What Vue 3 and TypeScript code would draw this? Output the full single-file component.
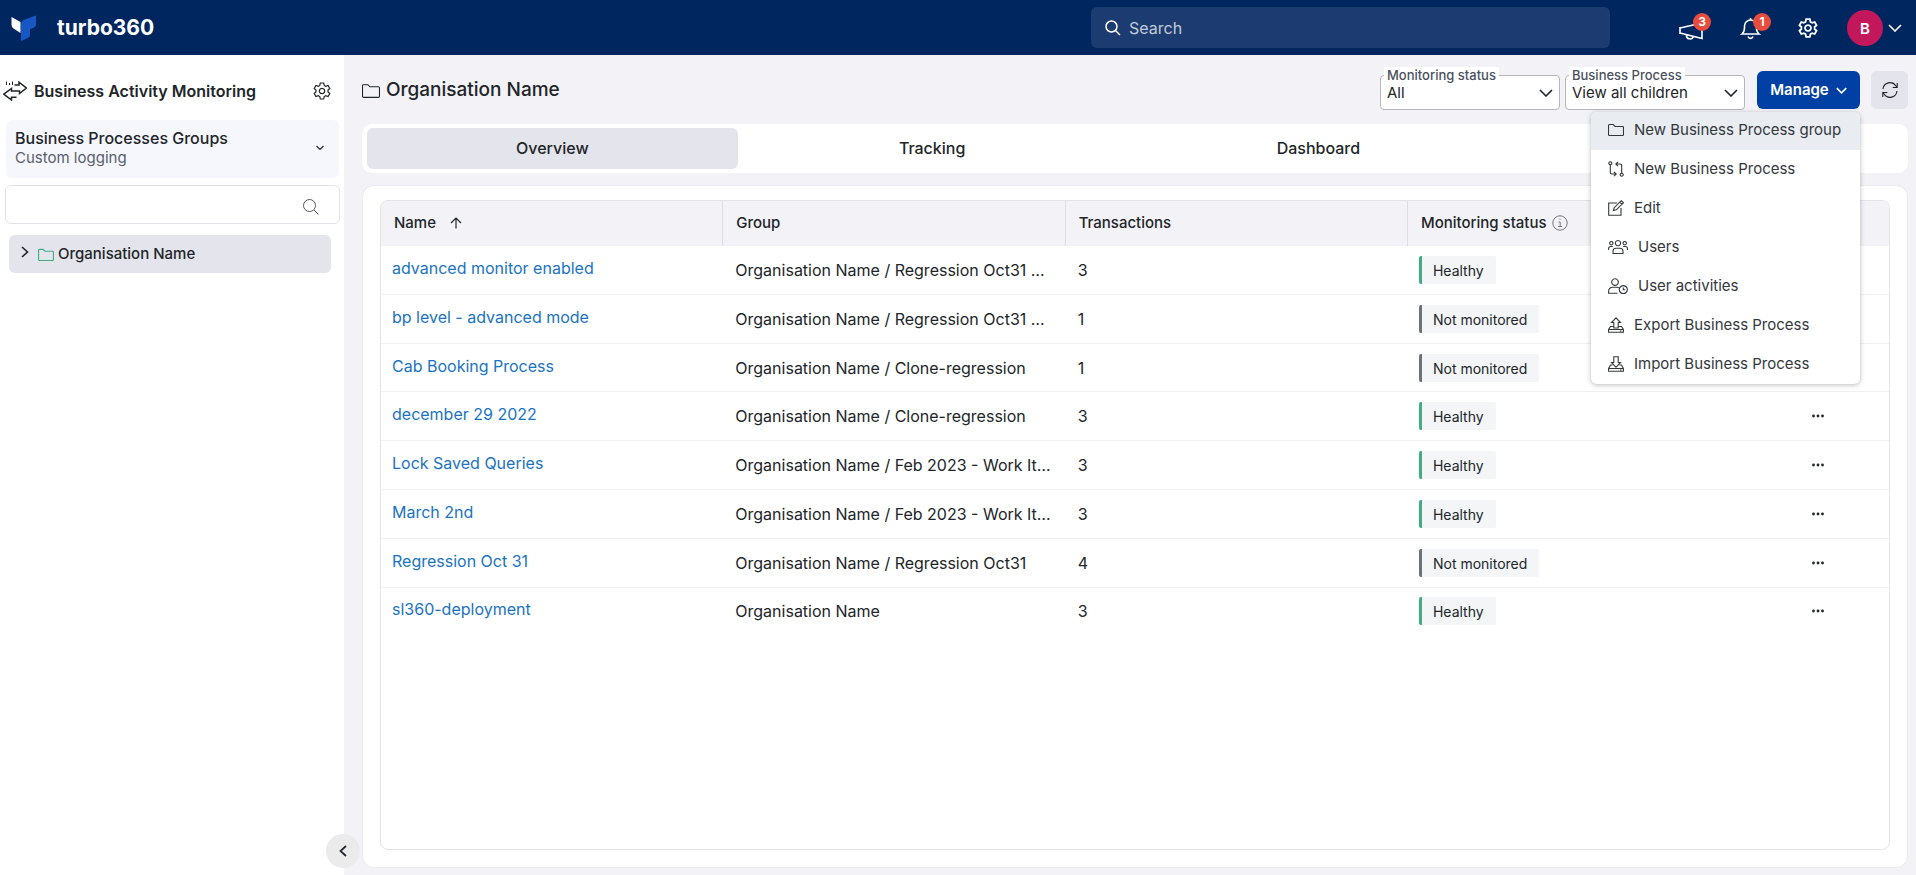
<script setup lang="ts">
import { ref } from 'vue'

interface ProcessRow {
  name: string
  group: string
  transactions: number
  healthy: boolean
}

interface MenuItem {
  label: string
  wide?: boolean
  d: string
}

const rows: ProcessRow[] = [
  { name: 'advanced monitor enabled', group: 'Organisation Name / Regression Oct31 …', transactions: 3, healthy: true },
  { name: 'bp level - advanced mode', group: 'Organisation Name / Regression Oct31 …', transactions: 1, healthy: false },
  { name: 'Cab Booking Process', group: 'Organisation Name / Clone-regression', transactions: 1, healthy: false },
  { name: 'december 29 2022', group: 'Organisation Name / Clone-regression', transactions: 3, healthy: true },
  { name: 'Lock Saved Queries', group: 'Organisation Name / Feb 2023 - Work It…', transactions: 3, healthy: true },
  { name: 'March 2nd', group: 'Organisation Name / Feb 2023 - Work It…', transactions: 3, healthy: true },
  { name: 'Regression Oct 31', group: 'Organisation Name / Regression Oct31', transactions: 4, healthy: false },
  { name: 'sl360-deployment', group: 'Organisation Name', transactions: 3, healthy: true },
]

const menu: MenuItem[] = [
  { label: 'New Business Process group', d: 'M.5 3.5a1 1 0 0 1 1-1h3.6l2 2h7.4a1 1 0 0 1 1 1v7a1 1 0 0 1-1 1h-13a1 1 0 0 1-1-1z' },
  { label: 'New Business Process', d: 'M2.3 .8a1.5 1.5 0 1 0 .01 0zM2.3 3.8v7.7a1.5 1.5 0 0 0 1.5 1.5H8M6 11l2.2 2L6 15.2M13.7 12.2a1.5 1.5 0 1 0 .01 0zM13.7 12.2V4.5a1.5 1.5 0 0 0-1.5-1.5H8M10 1L7.8 3l2.2 2.2' },
  { label: 'Edit', d: 'M9 3H.7v12.3H13V8M5.5 10.5l.7-2.8L13.3 .7l2.1 2.1-7.1 7zM11.8 2.2l2.1 2.1' },
  { label: 'Users', wide: true, d: 'M10 1.5a2.6 2.6 0 1 0 .01 0zM5 14.5v-2.2a3 3 0 0 1 3-3h4a3 3 0 0 1 3 3v2.2zM3.3 2.5a1.7 1.7 0 1 0 .01 0zM16.7 2.5a1.7 1.7 0 1 0 .01 0zM.6 11V9.5a2 2 0 0 1 2-2h2.2M19.4 11V9.5a2 2 0 0 0-2-2h-2.2' },
  { label: 'User activities', wide: true, d: 'M7 .8a3.3 3.3 0 1 0 .01 0zM9.500 15.3H.6v-2a4 4 0 0 1 4-4H9q1 0 2 .6M15.3 7.6a4 4 0 1 0 .01 0zM15.3 9.5v2.2h2' },
  { label: 'Export Business Process', d: 'M5.5 9.5h-3L.6 12.5v2.8h14.8v-2.8l-1.9-3h-3M.6 12.5h14.8M5.8 11V5.500H3.500L8 .8l4.5 4.7h-2.300V11zM12 14h1.5' },
  { label: 'Import Business Process', d: 'M4.5 9h-2L.6 12.5v2.8h14.8v-2.8L13.500 9h-2M.6 12.5h14.8M5.8 .8v5.7H3.5L8 11.300l4.500-4.800h-2.300V.8zM12 14h1.5' },
]

const folderPath = 'M.5 2.5a1 1 0 0 1 1-1h4l2 2h8a1 1 0 0 1 1 1v8a1 1 0 0 1-1 1h-14a1 1 0 0 1-1-1z'
const gearPath =
  'M8.3 1h3.4l.5 2.4 1.6 .9 2.3-.8 1.7 3-1.8 1.6v1.8l1.8 1.6-1.7 3-2.3-.8-1.6 .9-.5 2.4H8.3l-.5-2.4-1.6-.9-2.3 .8-1.7-3L4 9.900V8.100L2.200 6.500l1.700-3 2.300 .8 1.600-.9zM10 6.300a2.700 2.700 0 1 0 .01 0z'

const search = ref('')
const treeFilter = ref('')
const status = ref('All')
const scope = ref('View all children')
</script>

<template>
  <div class="app">
    <header class="topbar">
      <svg class="logo" viewBox="0 0 26 26" aria-hidden="true">
        <path d="M.5 2L9.500 7v11L2.500 13.500Q.5 12 .5 9.500z" fill="#fff" />
        <path d="M10 8.500Q10 6 12.500 5L25 .5v9q0 2-2 3l-4 1.800V20q0 2-2 3l-7 3z" fill="#1657c4" />
      </svg>
      <span class="brand">turbo360</span>
      <label class="global-search">
        <svg viewBox="0 0 16 16" class="i16" aria-hidden="true"><circle cx="6.5" cy="6.5" r="5.5" /><path d="M10.500 10.500L15 15" /></svg>
        <input v-model="search" type="text" placeholder="Search" aria-label="Search" />
      </label>
      <nav class="top-actions">
        <button class="icon-btn">
          <svg class="i24" viewBox="0 0 24 24" aria-hidden="true"><path d="M1 11v7M1 12L23 7v15.500L1 17M7.500 19a3.500 3.500 0 0 0 6.800 1.500" /></svg>
          <span class="badge">3</span>
        </button>
        <button class="icon-btn bell">
          <svg class="i24" viewBox="0 0 24 24" aria-hidden="true"><path d="M3 18q2.500-2 2.500-6V10a6 6 0 0 1 12 0v2q0 4 2.500 6zM11.500 4V2M9 20.500a2.600 2.600 0 0 0 5 0" /></svg>
          <span class="badge">1</span>
        </button>
        <button class="icon-btn settings">
          <svg class="i22" viewBox="0 0 20 18" aria-hidden="true"><path :d="gearPath" /></svg>
        </button>
        <button class="profile">
          <span class="avatar">B</span>
          <svg class="chev" viewBox="0 0 14 8" aria-hidden="true"><path d="M1 1l6 6 6-6" /></svg>
        </button>
      </nav>
    </header>

    <div class="body">
      <aside class="sidebar">
        <div class="side-head">
          <svg class="swap" viewBox="0 0 24 20" aria-hidden="true">
            <path d="M11.500 4H16V1.200L23.300 7 16.500 12.500V10H8.500V7.500L.8 13.200 8.500 19v-2.700h5" />
            <path class="thin" d="M3.500 .5V4M6.500 2v2M9.500 .5V4" />
          </svg>
          <h1>Business Activity Monitoring</h1>
          <button class="icon-btn">
            <svg class="i20" viewBox="0 0 20 18" aria-hidden="true"><path :d="gearPath" /></svg>
          </button>
        </div>
        <button class="group-card">
          <span class="group-text">
            <strong>Business Processes Groups</strong>
            <small>Custom logging</small>
          </span>
          <svg class="mini" viewBox="0 0 8 6" aria-hidden="true"><path d="M.5 1L4 4.500 7.500 1" /></svg>
        </button>
        <label class="side-search">
          <input v-model="treeFilter" type="text" />
          <svg class="i16" viewBox="0 0 16 16" aria-hidden="true"><circle cx="6.5" cy="6.5" r="6" /><path d="M11 11l4.500 4.500" /></svg>
        </label>
        <button class="tree-item">
          <svg class="tree-chev" viewBox="0 0 8 12" aria-hidden="true"><path d="M1 1l5.500 5L1 11" /></svg>
          <svg class="tree-folder" viewBox="0 0 17 14" aria-hidden="true"><path :d="folderPath" /></svg>
          <span>Organisation Name</span>
        </button>
        <button class="collapse">
          <svg viewBox="0 0 8 12" aria-hidden="true"><path d="M7 1L1.500 6 7 11" /></svg>
        </button>
      </aside>

      <main class="main">
        <div class="toolbar">
          <svg class="title-folder" viewBox="0 0 17 14" aria-hidden="true"><path :d="folderPath" /></svg>
          <h2>Organisation Name</h2>
          <div class="field">
            <label for="status">Monitoring status</label>
            <select id="status" v-model="status"><option>All</option></select>
            <svg viewBox="0 0 14 8" aria-hidden="true"><path d="M1 1l6 6 6-6" /></svg>
          </div>
          <div class="field">
            <label for="scope">Business Process</label>
            <select id="scope" v-model="scope"><option>View all children</option></select>
            <svg viewBox="0 0 14 8" aria-hidden="true"><path d="M1 1l6 6 6-6" /></svg>
          </div>
          <div class="manage-wrap">
            <button class="manage">
              Manage
              <svg viewBox="0 0 14 8" aria-hidden="true"><path d="M1 1l6 6 6-6" /></svg>
            </button>
            <ul class="menu">
              <li v-for="(item, i) in menu" :key="item.label">
                <button :class="{ active: i === 0 }">
                  <svg :class="{ wide: item.wide }" :viewBox="item.wide ? '0 0 20 16' : '0 0 16 16'" aria-hidden="true"><path :d="item.d" /></svg>
                  {{ item.label }}
                </button>
              </li>
            </ul>
          </div>
          <button class="refresh">
            <svg viewBox="0 0 16 16" aria-hidden="true"><path d="M1 7a7 7 0 0 1 12.800-3.200L15 5.500M15.200 1v4.500h-4.500M15 9a7 7 0 0 1-12.800 3.200L1 10.500M.8 15v-4.500h4.500" /></svg>
          </button>
        </div>

        <nav class="tabs">
          <button class="on">Overview</button>
          <button>Tracking</button>
          <button>Dashboard</button>
        </nav>

        <section class="card">
          <div class="table-box">
            <table>
              <colgroup>
                <col class="c-main" /><col class="c-main" /><col class="c-main" /><col class="c-main" /><col />
              </colgroup>
              <thead>
                <tr>
                  <th>
                    <span class="th">Name
                      <svg class="sort" viewBox="0 0 12 12" aria-hidden="true"><path d="M6 11.500V1M1 6l5-5 5 5" /></svg>
                    </span>
                  </th>
                  <th>Group</th>
                  <th>Transactions</th>
                  <th>
                    <span class="th tight">Monitoring status
                      <svg class="info" viewBox="0 0 16 16" aria-hidden="true"><circle cx="8" cy="8" r="7.2" /><path d="M6.500 7h1.700v4.500M6.200 11.500h4M7.500 4.200h1" /></svg>
                    </span>
                  </th>
                  <td></td>
                </tr>
              </thead>
              <tbody>
                <tr v-for="row in rows" :key="row.name">
                  <td class="name"><a href="#">{{ row.name }}</a></td>
                  <td>{{ row.group }}</td>
                  <td>{{ row.transactions }}</td>
                  <td class="state"><span class="tag" :class="{ ok: row.healthy }">{{ row.healthy ? 'Healthy' : 'Not monitored' }}</span></td>
                  <td class="more">
                    <button>
                      <svg viewBox="0 0 12 4" aria-hidden="true"><circle cx="1.5" cy="2" r="1.4" /><circle cx="6" cy="2" r="1.4" /><circle cx="10.5" cy="2" r="1.4" /></svg>
                    </button>
                  </td>
                </tr>
              </tbody>
            </table>
          </div>
        </section>
      </main>
    </div>
  </div>
</template>

<style>
body {
  margin: 0;
}
</style>

<style scoped>
.app {
  min-height: 100vh;
  display: flex;
  flex-direction: column;
  font-family: Inter, "Liberation Sans", sans-serif;
  font-size: 16px;
  line-height: 20px;
  color: #212529;
  background: #f3f3f7;
}
.app *,
.app *::before {
  box-sizing: border-box;
}
button,
input,
select {
  font: inherit;
  color: inherit;
  border: 0;
  background: none;
  padding: 0;
  margin: 0;
  outline: 0;
}
svg {
  fill: none;
  stroke: currentColor;
  stroke-width: 1.2;
  flex: none;
  display: block;
}
h1,
h2 {
  margin: 0;
}
.i16 { width: 16px; height: 16px; }
.i20 { width: 20px; height: 18px; }
.i22 { width: 22px; height: 20px; }
.i24 { width: 24px; height: 24px; }

.topbar {
  height: 55px;
  display: flex;
  align-items: center;
  padding: 0 14px 0 11px;
  background: #00265f;
  color: #fff;
}
.logo {
  width: 26px;
  height: 26px;
  stroke: none;
}
.brand {
  flex: 1;
  margin-left: 20px;
  font-size: 21px;
  font-weight: 700;
}
.global-search {
  width: 519px;
  height: 41px;
  margin-right: 69px;
  padding: 0 14px;
  display: flex;
  align-items: center;
  gap: 8px;
  border-radius: 6px;
  background: #1c3b70;
}
.global-search svg {
  stroke-width: 1.5;
}
.global-search input {
  flex: 1;
  min-width: 0;
}
.global-search input::placeholder {
  color: #c3cbd9;
  opacity: 1;
}
.top-actions {
  display: flex;
  align-items: center;
}
.icon-btn {
  position: relative;
  display: block;
}
.top-actions .icon-btn {
  margin-right: 36px;
}
.top-actions .bell {
  margin-right: 34px;
}
.top-actions .settings {
  margin-right: 28px;
}
.top-actions svg {
  stroke-width: 1.6;
}
.badge {
  position: absolute;
  top: -3px;
  left: 14px;
  width: 18px;
  height: 18px;
  border-radius: 50%;
  background: #e74c3c;
  font-size: 12px;
  line-height: 18px;
  font-weight: 700;
  text-align: center;
}
.profile {
  display: flex;
  align-items: center;
  gap: 5px;
}
.avatar {
  width: 36px;
  height: 36px;
  border-radius: 50%;
  background: #c2185b;
  font-size: 15px;
  line-height: 37px;
  font-weight: 600;
  text-align: center;
}
.chev {
  width: 14px;
  height: 8px;
}

.body {
  flex: 1;
  display: flex;
}
.sidebar {
  position: relative;
  width: 344px;
  flex: none;
  display: flex;
  flex-direction: column;
  background: #fff;
}
.side-head {
  height: 65px;
  padding: 7px 12px 0 3px;
  display: flex;
  align-items: center;
}
.swap {
  width: 24px;
  height: 20px;
  stroke-width: 1.5;
}
.swap .thin {
  stroke-width: 1;
}
.side-head h1 {
  flex: 1;
  margin-left: 7px;
  font-size: 16px;
  font-weight: 600;
}
.group-card {
  margin: 0 5px 0 6px;
  padding: 8px 15px 10px 9px;
  display: flex;
  align-items: center;
  justify-content: space-between;
  border-radius: 6px;
  background: #f6f7fc;
  text-align: left;
}
.group-text {
  display: flex;
  flex-direction: column;
}
.group-text strong {
  font-weight: 500;
}
.group-text small {
  font-size: 15px;
  color: #56606b;
}
.mini {
  width: 8px;
  height: 6px;
}
.side-search {
  height: 39px;
  margin: 7px 4px 0 5px;
  padding: 4px 20px 0 10px;
  display: flex;
  align-items: center;
  border: 1px solid #e2e2e6;
  border-radius: 6px;
  color: #555;
}
.side-search input {
  flex: 1;
  min-width: 0;
}
.side-search svg {
  stroke-width: 1;
}
.tree-item {
  height: 38px;
  margin: 11px 13px 0 9px;
  padding: 0 12px;
  display: flex;
  align-items: center;
  border-radius: 6px;
  background: #e4e4ec;
  font-size: 15px;
  font-weight: 500;
}
.tree-chev {
  width: 8px;
  height: 12px;
  margin-bottom: 4px;
  stroke-width: 1.6;
}
.tree-folder {
  width: 16px;
  height: 13px;
  margin: 0 4px 0 9px;
  color: #40ae80;
}
.collapse {
  position: absolute;
  right: -16px;
  bottom: 7px;
  width: 34px;
  height: 34px;
  display: grid;
  place-items: center;
  border-radius: 50%;
  background: #ebebec;
}
.collapse svg {
  width: 8px;
  height: 12px;
  stroke-width: 1.7;
}

.main {
  flex: 1;
  min-width: 0;
  display: flex;
  flex-direction: column;
  padding: 16px 8px 7px 18px;
}
.toolbar {
  height: 38px;
  margin-bottom: 15px;
  display: flex;
  align-items: center;
}
.title-folder {
  width: 18px;
  height: 15px;
  stroke-width: 1;
}
.toolbar h2 {
  flex: 1;
  margin-left: 6px;
  font-size: 19px;
  font-weight: 500;
}
.field {
  position: relative;
  width: 180px;
  height: 35px;
  margin: 5px 5px 0 0;
}
.field label {
  position: absolute;
  top: -8px;
  left: 4px;
  padding: 0 3px;
  background: #fff;
  font-size: 13px;
  line-height: 16px;
  font-weight: 500;
  color: #4a5160;
}
.field select {
  width: 100%;
  height: 100%;
  padding: 0 30px 0 6px;
  appearance: none;
  border: 1px solid #b5b5ba;
  border-radius: 4px;
  background: #fff;
  font-size: 15px;
}
.field svg {
  position: absolute;
  right: 7px;
  top: 14px;
  width: 14px;
  height: 8px;
  stroke-width: 1.6;
  pointer-events: none;
}
.manage-wrap {
  position: relative;
  margin: 0 11px 0 7px;
}
.manage {
  height: 38px;
  width: 103px;
  display: flex;
  align-items: center;
  justify-content: center;
  gap: 7px;
  border-radius: 6px;
  background: #0040a5;
  color: #fff;
  font-size: 15px;
  font-weight: 600;
}
.manage svg {
  width: 11px;
  height: 7px;
  stroke-width: 2;
}
.menu {
  position: absolute;
  z-index: 2;
  top: 41px;
  right: 0;
  width: 269px;
  margin: 0;
  padding: 0;
  list-style: none;
  border-radius: 6px;
  overflow: hidden;
  background: #fff;
  box-shadow: 0 1px 5px rgba(0, 0, 0, 0.28);
}
.menu button {
  width: 100%;
  height: 39px;
  padding: 0 17px 2px;
  display: flex;
  align-items: center;
  gap: 10px;
  font-size: 15px;
  white-space: nowrap;
  color: #33383d;
}
.menu button.active {
  height: 38px;
  background: #e9ecf1;
}
.menu svg {
  width: 16px;
  height: 16px;
  stroke-width: 1.1;
}
.menu svg.wide {
  width: 20px;
}
.refresh {
  width: 37px;
  height: 38px;
  display: grid;
  place-items: center;
  border-radius: 6px;
  background: #e4e4ec;
}
.refresh svg {
  width: 16px;
  height: 16px;
  stroke-width: 1.1;
}

.tabs {
  display: grid;
  grid-template-columns: 371fr 371fr 384fr 384fr;
  gap: 9px;
  padding: 4px 5px;
  border-radius: 10px;
  background: #fff;
}
.tabs button {
  height: 41px;
  padding-bottom: 1px;
  border-radius: 6px;
  font-weight: 500;
}
.tabs button.on {
  background: #e4e4ec;
}
.card {
  flex: 1;
  display: flex;
  margin-top: 12px;
  padding: 14px 17px 17px;
  border: 1px solid #ebebef;
  border-radius: 12px;
  background: #fff;
}
.table-box {
  flex: 1;
  border: 1px solid #e4e4e8;
  border-radius: 8px;
  overflow: hidden;
}
table {
  width: 100%;
  height: 434px;
  table-layout: fixed;
  border-collapse: separate;
  border-spacing: 0;
}
.c-main {
  width: 22.7%;
}
th,
td {
  padding: 0 0 0 12px;
  text-align: left;
  white-space: nowrap;
}
thead tr {
  height: 45px;
  background: #f3f3f7;
}
th {
  padding: 0 0 2px 13px;
  border-right: 1px solid #dddde3;
  font-size: 15px;
  font-weight: 500;
}
.th {
  display: flex;
  align-items: center;
  gap: 14px;
}
.th.tight {
  gap: 5px;
}
.sort {
  width: 12px;
  height: 12px;
}
.info {
  width: 16px;
  height: 16px;
  stroke-width: 1;
  color: #777;
}
tbody td {
  border-bottom: 1px solid #f1f1f3;
}
tbody tr:last-child td {
  border-bottom: 0;
}
td.name {
  padding-left: 11px;
  padding-bottom: 4px;
}
a {
  color: #1a73c1;
  text-decoration: none;
}
td.state {
  padding-left: 11px;
}
.tag {
  display: inline-block;
  height: 28px;
  padding: 0 12px 0 11px;
  border-left: 3px solid #6c727c;
  border-radius: 2px;
  background: #f3f5f7;
  font-size: 14px;
  line-height: 29px;
  vertical-align: middle;
}
.tag.ok {
  border-left-color: #40ae80;
}
td.more {
  padding: 0 4px 0 0;
}
.more button {
  display: block;
  margin: 0 auto;
}
.more svg {
  width: 12px;
  height: 4px;
  fill: currentColor;
  stroke: none;
}
</style>
